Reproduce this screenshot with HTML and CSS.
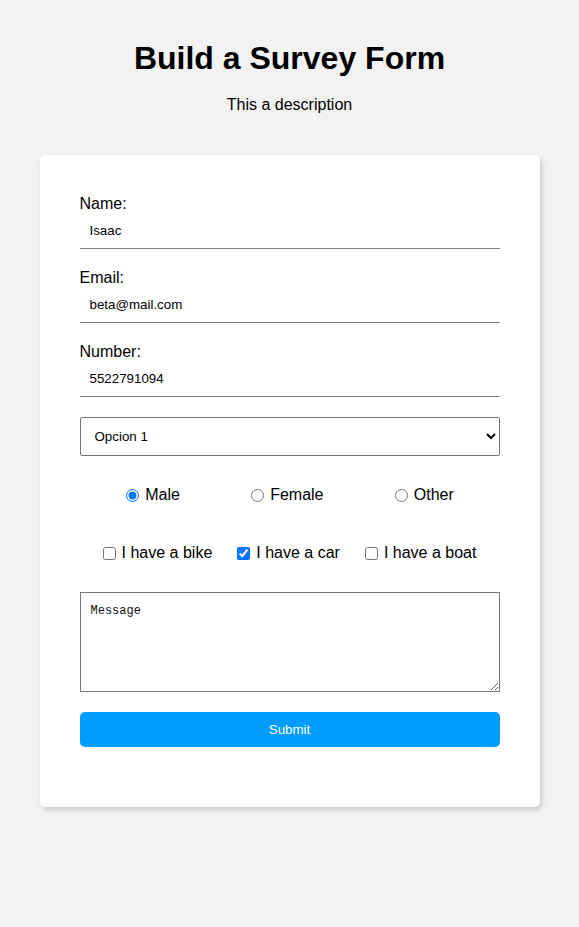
FILE: index.html
```html
<!DOCTYPE html>
<html lang="en">
<head>
<meta charset="utf-8">
<title>Survey Form</title>
<link rel="stylesheet" href="styles.css">
</head>
<body>
<header class="header">
  <h1 class="title">Build a Survey Form</h1>
  <p class="description">This a description</p>
</header>
<form class="card">
  <div class="field">
    <label class="label" for="name">Name:</label>
    <input class="line-input" id="name" type="text" value="Isaac">
  </div>
  <div class="field">
    <label class="label" for="email">Email:</label>
    <input class="line-input" id="email" type="email" value="beta@mail.com">
  </div>
  <div class="field">
    <label class="label" for="number">Number:</label>
    <input class="line-input" id="number" type="text" value="5522791094">
  </div>
  <select class="dropdown">
    <option>Opcion 1</option>
    <option>Opcion 2</option>
  </select>
  <div class="radio-row">
    <label class="choice"><input class="mark" type="radio" name="gender" checked>Male</label>
    <label class="choice"><input class="mark" type="radio" name="gender">Female</label>
    <label class="choice"><input class="mark" type="radio" name="gender">Other</label>
  </div>
  <div class="check-row">
    <label class="choice"><input class="mark" type="checkbox">I have a bike</label>
    <label class="choice"><input class="mark" type="checkbox" checked>I have a car</label>
    <label class="choice"><input class="mark" type="checkbox">I have a boat</label>
  </div>
  <textarea class="message">Message</textarea>
  <button class="submit" type="button">Submit</button>
</form>
</body>
</html>
```
FILE: styles.css
```css
html, body {
  margin: 0;
  padding: 0;
}
html {
  background: #f2f2f2;
}
body {
  font-family: "Liberation Sans", Arial, sans-serif;
  color: #000;
  padding-bottom: 120px;
}
.header {
  padding-top: 40px;
  text-align: center;
}
.title {
  margin: 0 0 19px;
  font-size: 32px;
  line-height: 37px;
  font-weight: bold;
}
.description {
  margin: 0;
  font-size: 16px;
  line-height: 18px;
}
.card {
  width: 420px;
  margin: 41px auto 0;
  padding: 40px;
  background: #fff;
  border-radius: 5px;
  box-shadow: 2px 3px 4px rgba(0, 0, 0, 0.16);
  display: flex;
  flex-direction: column;
}
.field {
  display: flex;
  flex-direction: column;
  margin-bottom: 20px;
}
.label {
  font-size: 16px;
  line-height: 18px;
}
.line-input {
  box-sizing: border-box;
  width: 100%;
  height: 36px;
  padding: 10px;
  border: none;
  border-bottom: 1px solid #808080;
  font-family: "Liberation Sans", Arial, sans-serif;
  font-size: 13.333px;
  color: #000;
  outline: none;
}
.dropdown {
  box-sizing: border-box;
  width: 100%;
  height: 39px;
  padding: 0 10px;
  font-family: "Liberation Sans", Arial, sans-serif;
  font-size: 13.333px;
  color: #000;
  background: #fff;
  border: 1px solid #767676;
  border-radius: 2px;
}
.radio-row {
  margin-top: 20px;
  padding: 10px 10px 10px 11px;
  height: 18px;
  display: flex;
  justify-content: space-around;
  align-items: center;
}
.check-row {
  margin-top: 20px;
  padding: 10px;
  height: 18px;
  display: flex;
  justify-content: center;
  gap: 25px;
  align-items: center;
}
.choice {
  display: inline-flex;
  align-items: center;
  font-size: 16px;
  line-height: 18px;
}
.mark {
  width: 13px;
  height: 13px;
  margin: 0 6px 0 0;
}
.message {
  box-sizing: border-box;
  width: 100%;
  height: 100px;
  margin-top: 20px;
  padding: 11px 10px 10px;
  border: 1px solid #767676;
  font-family: "Liberation Mono", monospace;
  font-size: 12px;
  color: #111;
  resize: vertical;
}
.submit {
  margin: 20px 0 20px;
  width: 100%;
  height: 35px;
  padding: 10px;
  border: none;
  border-radius: 5px;
  background: #009cff;
  color: #fff;
  font-family: "Liberation Sans", Arial, sans-serif;
  font-size: 13.333px;
  line-height: 15px;
}
```
